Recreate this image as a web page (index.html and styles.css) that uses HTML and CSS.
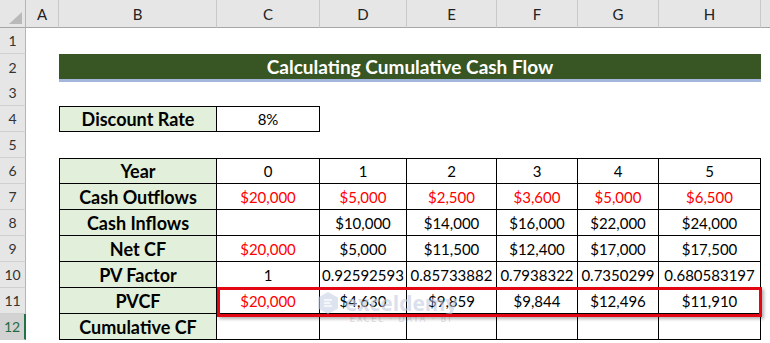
FILE: index.html
```html
<!DOCTYPE html>
<html lang="en">
<head>
    <meta charset="UTF-8">
    <title>Calculating Cumulative Cash Flow</title>
    <link rel="stylesheet" href="styles.css">
</head>
<body>
    <div class="sheet">
        <div class="row head">
            <div class="corner"><span class="tri"></span></div>
            <div class="ch">A</div>
            <div class="ch">B</div>
            <div class="ch">C</div>
            <div class="ch">D</div>
            <div class="ch">E</div>
            <div class="ch">F</div>
            <div class="ch">G</div>
            <div class="ch">H</div>
            <div class="ch rest"></div>
        </div>

        <div class="row"><div class="rn">1</div></div>
        <div class="row">
            <div class="rn">2</div><div></div>
            <div class="title">Calculating Cumulative Cash Flow</div>
        </div>
        <div class="row"><div class="rn">3</div></div>
        <div class="row">
            <div class="rn">4</div><div></div>
            <div class="t lab top first">Discount Rate</div>
            <div class="t top">8%</div>
        </div>
        <div class="row"><div class="rn">5</div></div>
        <div class="row">
            <div class="rn">6</div><div></div>
            <div class="t lab top first">Year</div>
            <div class="t top">0</div>
            <div class="t top">1</div>
            <div class="t top">2</div>
            <div class="t top">3</div>
            <div class="t top">4</div>
            <div class="t top">5</div>
        </div>
        <div class="row">
            <div class="rn">7</div><div></div>
            <div class="t lab first">Cash Outflows</div>
            <div class="t neg">$20,000</div>
            <div class="t neg">$5,000</div>
            <div class="t neg">$2,500</div>
            <div class="t neg">$3,600</div>
            <div class="t neg">$5,000</div>
            <div class="t neg">$6,500</div>
        </div>
        <div class="row">
            <div class="rn">8</div><div></div>
            <div class="t lab first">Cash Inflows</div>
            <div class="t"></div>
            <div class="t">$10,000</div>
            <div class="t">$14,000</div>
            <div class="t">$16,000</div>
            <div class="t">$22,000</div>
            <div class="t">$24,000</div>
        </div>
        <div class="row">
            <div class="rn">9</div><div></div>
            <div class="t lab first">Net CF</div>
            <div class="t neg">$20,000</div>
            <div class="t">$5,000</div>
            <div class="t">$11,500</div>
            <div class="t">$12,400</div>
            <div class="t">$17,000</div>
            <div class="t">$17,500</div>
        </div>
        <div class="row">
            <div class="rn">10</div><div></div>
            <div class="t lab first">PV Factor</div>
            <div class="t">1</div>
            <div class="t">0.92592593</div>
            <div class="t">0.85733882</div>
            <div class="t">0.7938322</div>
            <div class="t">0.7350299</div>
            <div class="t">0.680583197</div>
        </div>
        <div class="row">
            <div class="rn">11</div><div></div>
            <div class="t lab first">PVCF</div>
            <div class="t neg">$20,000</div>
            <div class="t">$4,630</div>
            <div class="t">$9,859</div>
            <div class="t">$9,844</div>
            <div class="t">$12,496</div>
            <div class="t">$11,910</div>
        </div>
        <div class="row">
            <div class="rn sel">12</div><div></div>
            <div class="t lab first">Cumulative CF</div>
            <div class="t"></div>
            <div class="t"></div>
            <div class="t"></div>
            <div class="t"></div>
            <div class="t"></div>
            <div class="t"></div>
        </div>

        <!-- watermark -->
        <div class="watermark">
            <svg width="24" height="24" viewBox="0 0 24 24">
                <path d="M12 1 L22 6.5 L22 17.5 L12 23 L2 17.5 L2 6.5 Z" fill="#c9d3e6"/>
                <path d="M8 9 L16 9 M8 12 L14 12 M8 15 L16 15" stroke="#eef2f8" stroke-width="2"/>
            </svg>
            <div class="wm-text">
                <span class="wm-name">exceldemy</span>
                <span class="wm-sub">EXCEL · DATA · BI</span>
            </div>
        </div>

        <!-- highlight on row 11 -->
        <div class="highlight"></div>
    </div>
</body>
</html>
```

FILE: styles.css
```css
body {
    margin: 0;
    background-color: white;
    font-family: Lato, "Open Sans", sans-serif;
    color: #000;
}

.sheet {
    position: relative;
    width: 770px;
    height: 343px;
    overflow: hidden;
}

.row {
    display: grid;
    grid-template-columns: 26px 33px 158px 103px 87px 90px 81px 81px 102px 1fr;
    height: 26px;
}

.row.head {
    height: 28px;
    background-color: #e6e6e6;
}

.corner {
    display: flex;
    justify-content: flex-end;
    align-items: flex-end;
    padding: 0 3px 3px 0;
    border-right: 1px solid #b4b4b4;
    border-bottom: 1px solid #a6a6a6;
    box-sizing: border-box;
}

.tri {
    width: 0;
    height: 0;
    border-left: 13px solid transparent;
    border-bottom: 12px solid #b9b9b9;
}

.ch {
    display: flex;
    align-items: center;
    justify-content: center;
    font-size: 15px;
    color: #222;
    border-right: 1px solid #c9c9c9;
    border-bottom: 1px solid #a6a6a6;
    box-sizing: border-box;
}

.ch.rest {
    border-right: none;
}

.rn {
    display: flex;
    align-items: center;
    justify-content: center;
    font-size: 14px;
    color: #333;
    background-color: #e6e6e6;
    border-right: 1px solid #b4b4b4;
    border-bottom: 1px solid #d0d0d0;
    box-sizing: border-box;
}

.rn.sel {
    background-color: #d2d2d2;
    color: #1f6b45;
    border-right: 2px solid #217346;
}

.title {
    grid-column: 3 / 10;
    height: 28px;
    background-color: #375623;
    border-bottom: 3px solid #a5b6dc;
    box-sizing: border-box;
    color: white;
    font-weight: bold;
    font-size: 19px;
    display: flex;
    align-items: center;
    justify-content: center;
}

.t {
    display: flex;
    align-items: center;
    justify-content: center;
    font-size: 15px;
    border-right: 1px solid #000;
    border-bottom: 1px solid #000;
    box-sizing: border-box;
    white-space: nowrap;
}

.t.first {
    border-left: 1px solid #000;
}

.t.top {
    border-top: 1px solid #000;
}

.t.lab {
    background-color: #e2efda;
    font-weight: bold;
    font-size: 18px;
}

.t.neg {
    color: #ff0000;
}

.highlight {
    position: absolute;
    left: 217px;
    top: 287px;
    width: 545px;
    height: 30px;
    border: 3px solid #e30613;
    box-sizing: border-box;
    box-shadow: 2px 2px 3px rgba(0, 0, 0, 0.3);
}

.watermark {
    position: absolute;
    left: 316px;
    top: 291px;
    display: flex;
    gap: 5px;
    opacity: 0.6;
}

.wm-text {
    display: flex;
    flex-direction: column;
    align-items: center;
}

.wm-name {
    font-family: "Open Sans", sans-serif;
    font-weight: bold;
    font-size: 21px;
    line-height: 24px;
    color: #c3cde0;
}

.wm-sub {
    font-family: "DejaVu Sans", sans-serif;
    font-size: 8px;
    letter-spacing: 2px;
    color: #c4c4c4;
}
```
